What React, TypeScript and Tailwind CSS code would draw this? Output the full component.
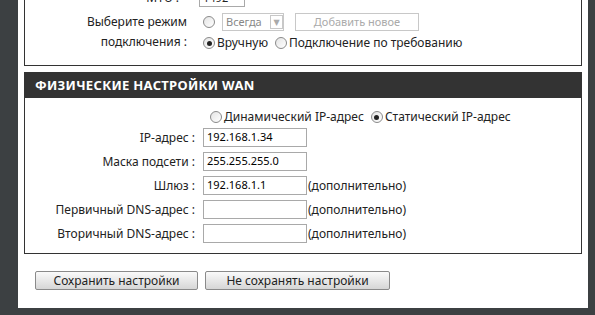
import React from 'react';

const Radio: React.FC<{ checked?: boolean }> = ({ checked }) => (
  <span className="inline-flex h-[12px] w-[12px] shrink-0 items-center justify-center rounded-full border border-[#8a8a8a] bg-gradient-to-br from-[#e4e4e4] to-white">
    {checked && <span className="h-[5px] w-[5px] rounded-full bg-[#222]" />}
  </span>
);

const TextBox: React.FC<{ value?: string }> = ({ value }) => (
  <div className="flex h-[19px] w-[104px] items-center border border-[#a9a9a9] bg-white px-[3px] text-[11px] text-black">
    {value}
  </div>
);

const fields = [
  { label: 'IP-адрес :', value: '192.168.1.34', note: false },
  { label: 'Маска подсети :', value: '255.255.255.0', note: false },
  { label: 'Шлюз :', value: '192.168.1.1', note: true },
  { label: 'Первичный DNS-адрес :', value: '', note: true },
  { label: 'Вторичный DNS-адрес :', value: '', note: true },
];

const App: React.FC = () => {
  return (
    <div
      className="flex h-[315px] w-[595px] flex-col overflow-hidden bg-[#3c4042] text-[12px] text-[#222]"
      style={{ fontFamily: '"Noto Sans", "DejaVu Sans", sans-serif' }}
    >
      <div className="flex h-[308px] shrink-0">
        <div className="w-[18px] shrink-0 bg-[#3c4042]" />
        <div className="flex w-[570px] shrink-0 flex-col bg-white px-[6px]">
          {/* connection mode box, its top row (MTU) is cut off by the window */}
          <div className="mt-[-14px] flex h-[80px] flex-col border border-[#333] pt-[2px]">
            <div className="flex h-[18px] items-center">
              <div className="w-[158px] pr-[4px] text-right">MTU :</div>
              <div className="ml-[16px] h-[18px] w-[46px] border border-[#a9a9a9] px-[3px] text-[11px] leading-[16px]">1492</div>
            </div>
            <div className="mt-[5px] flex">
              <div className="w-[162px] text-right leading-[20px]">
                Выберите режим
                <br />
                подключения :
              </div>
              <div className="ml-[16px] flex flex-col gap-[1px]">
                <div className="flex h-[20px] items-center">
                  <Radio />
                  <div className="ml-[7px] flex h-[18px] w-[62px] items-center border border-[#c8c8c8] text-[11px] text-[#888]">
                    <span className="flex-1 pl-[3px]">Всегда</span>
                    <span className="flex h-[14px] w-[13px] items-center justify-center border border-[#c8c8c8] text-[8px] text-[#aaa]">
                      ▼
                    </span>
                  </div>
                  <div className="ml-[11px] flex h-[18px] w-[124px] items-center justify-center border border-[#c8c8c8] text-[11px] text-[#aaa]">
                    Добавить новое
                  </div>
                </div>
                <div className="flex h-[20px] items-center gap-[2px]">
                  <Radio checked />
                  <span>Вручную</span>
                  <span className="ml-[3px]" />
                  <Radio />
                  <span>Подключение по требованию</span>
                </div>
              </div>
            </div>
          </div>

          {/* WAN physical settings */}
          <div className="mt-[6px] flex flex-col border border-[#333]">
            <div className="flex h-[25px] items-center bg-[#333] px-[10px] text-[13px] font-bold tracking-[0.3px] text-white">
              ФИЗИЧЕСКИЕ НАСТРОЙКИ WAN
            </div>
            <div className="flex flex-col pb-[10px] pt-[9px]">
              <div className="flex h-[20px] items-center gap-[2px] pl-[185px]">
                <Radio />
                <span>Динамический IP-адрес</span>
                <span className="ml-[3px]" />
                <Radio checked />
                <span>Статический IP-адрес</span>
              </div>
              <div className="mt-[1px] flex flex-col gap-[5px]">
                {fields.map((f) => (
                  <div key={f.label} className="flex h-[19px] items-center">
                    <div className="w-[170px] text-right">{f.label}</div>
                    <div className="ml-[8px]">
                      <TextBox value={f.value} />
                    </div>
                    {f.note && <span className="ml-[1px]">(дополнительно)</span>}
                  </div>
                ))}
              </div>
            </div>
          </div>

          <div className="mt-[17px] flex gap-[7px] pl-[11px]">
            <button className="h-[19px] w-[163px] rounded-[2px] border border-[#8a8a8a] bg-gradient-to-b from-[#fafafa] to-[#d6d6d6] text-[12px] leading-none text-[#222]">
              Сохранить настройки
            </button>
            <button className="h-[19px] w-[185px] rounded-[2px] border border-[#8a8a8a] bg-gradient-to-b from-[#fafafa] to-[#d6d6d6] text-[12px] leading-none text-[#222]">
              Не сохранять настройки
            </button>
          </div>
        </div>
        <div className="flex-1 bg-[#3c4042]" />
      </div>
    </div>
  );
};

export default App;
